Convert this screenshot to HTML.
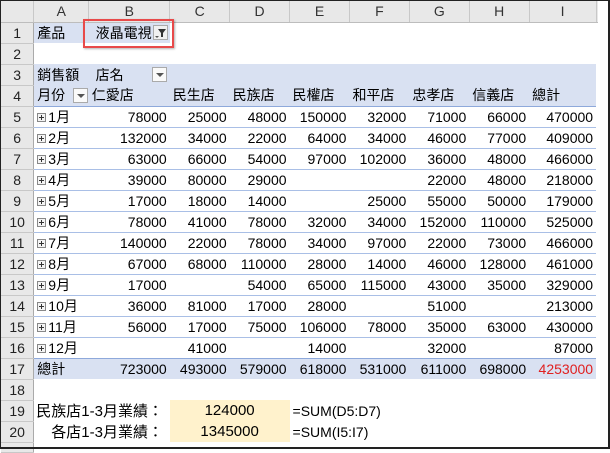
<!DOCTYPE html>
<html><head><meta charset="utf-8"><style>
*{margin:0;padding:0;box-sizing:border-box}
body{width:610px;height:449px;background:#fff;font-family:"Liberation Sans","Noto Sans CJK TC",sans-serif;font-size:14px;color:#000;overflow:hidden;position:relative}
.frame{position:absolute;left:0;top:0;width:610px;height:449px;border:1px solid #222;border-right:2px solid #222;border-bottom:2px solid #222;pointer-events:none;z-index:5}
table{border-collapse:collapse;table-layout:fixed;position:absolute;left:1px;top:1px}
td{height:21px;padding:0 3px;white-space:nowrap;overflow:visible;vertical-align:middle}
tr.h td{height:21px;background:#e8e8e8;text-align:center;border-right:1px solid #c8c8c8;border-bottom:1px solid #bdbdbd;color:#333;font-size:14px}
td.rh{background:#e8e8e8;text-align:center;border-right:1px solid #aaa;border-bottom:1px solid #c8c8c8;padding:0;font-size:14px;color:#222}
.n{text-align:right}
.bl{background:#d9e1f2}
tr.d td:not(.rh){border-bottom:1px solid #a9bfe6}
tr.r4 td:not(.rh){border-bottom:1px solid #8ea9db}
tr.tot td:not(.rh){background:#d9e1f2;border-top:1px solid #8ea9db}
.pl{display:inline-block;position:relative;width:9px;height:9px;border:1px solid #888;margin-right:2px;vertical-align:0;background:#f4f4f4}
.pl:before{content:"";position:absolute;left:1px;top:3px;width:5px;height:1px;background:#333}
.pl:after{content:"";position:absolute;left:3px;top:1px;width:1px;height:5px;background:#333}
.btn{position:absolute;width:15px;height:15px;border:1px solid #aaa;background:#fafafa}
.btn.a:after{content:"";position:absolute;left:3px;top:5px;border-left:4px solid transparent;border-right:4px solid transparent;border-top:4px solid #555}
.y{background:#fff2cc}
</style></head><body>
<table>
<colgroup><col style="width:33px"><col style="width:55px"><col style="width:81px"><col style="width:60px"><col style="width:60px"><col style="width:60px"><col style="width:60px"><col style="width:60px"><col style="width:60px"><col style="width:67px"><col style="width:14px"></colgroup>
<tr class="h"><td style="background:#e8e8e8"></td><td>A</td><td>B</td><td>C</td><td>D</td><td>E</td><td>F</td><td>G</td><td>H</td><td>I</td><td style="border-right:none"></td></tr>
<tr><td class="rh">1</td><td class="bl">產品</td><td class="bl">&nbsp;液晶電視</td><td colspan="8"></td></tr>
<tr><td class="rh">2</td><td colspan="10"></td></tr>
<tr><td class="rh">3</td><td class="bl">銷售額</td><td class="bl">&nbsp;店名</td><td class="bl"></td><td class="bl"></td><td class="bl"></td><td class="bl"></td><td class="bl"></td><td class="bl"></td><td class="bl"></td><td></td></tr>
<tr class="r4"><td class="rh">4</td><td class="bl">月份</td><td class="bl">仁愛店</td><td class="bl">民生店</td><td class="bl">民族店</td><td class="bl">民權店</td><td class="bl">和平店</td><td class="bl">忠孝店</td><td class="bl">信義店</td><td class="bl">總計</td><td style="border-bottom:none!important"></td></tr>
<tr class="d"><td class="rh">5</td><td><span class="pl"></span>1月</td><td class="n">78000</td><td class="n">25000</td><td class="n">48000</td><td class="n">150000</td><td class="n">32000</td><td class="n">71000</td><td class="n">66000</td><td class="n">470000</td><td style="border:none"></td></tr>
<tr class="d"><td class="rh">6</td><td><span class="pl"></span>2月</td><td class="n">132000</td><td class="n">34000</td><td class="n">22000</td><td class="n">64000</td><td class="n">34000</td><td class="n">46000</td><td class="n">77000</td><td class="n">409000</td><td style="border:none"></td></tr>
<tr class="d"><td class="rh">7</td><td><span class="pl"></span>3月</td><td class="n">63000</td><td class="n">66000</td><td class="n">54000</td><td class="n">97000</td><td class="n">102000</td><td class="n">36000</td><td class="n">48000</td><td class="n">466000</td><td style="border:none"></td></tr>
<tr class="d"><td class="rh">8</td><td><span class="pl"></span>4月</td><td class="n">39000</td><td class="n">80000</td><td class="n">29000</td><td class="n"></td><td class="n"></td><td class="n">22000</td><td class="n">48000</td><td class="n">218000</td><td style="border:none"></td></tr>
<tr class="d"><td class="rh">9</td><td><span class="pl"></span>5月</td><td class="n">17000</td><td class="n">18000</td><td class="n">14000</td><td class="n"></td><td class="n">25000</td><td class="n">55000</td><td class="n">50000</td><td class="n">179000</td><td style="border:none"></td></tr>
<tr class="d"><td class="rh">10</td><td><span class="pl"></span>6月</td><td class="n">78000</td><td class="n">41000</td><td class="n">78000</td><td class="n">32000</td><td class="n">34000</td><td class="n">152000</td><td class="n">110000</td><td class="n">525000</td><td style="border:none"></td></tr>
<tr class="d"><td class="rh">11</td><td><span class="pl"></span>7月</td><td class="n">140000</td><td class="n">22000</td><td class="n">78000</td><td class="n">34000</td><td class="n">97000</td><td class="n">22000</td><td class="n">73000</td><td class="n">466000</td><td style="border:none"></td></tr>
<tr class="d"><td class="rh">12</td><td><span class="pl"></span>8月</td><td class="n">67000</td><td class="n">68000</td><td class="n">110000</td><td class="n">28000</td><td class="n">14000</td><td class="n">46000</td><td class="n">128000</td><td class="n">461000</td><td style="border:none"></td></tr>
<tr class="d"><td class="rh">13</td><td><span class="pl"></span>9月</td><td class="n">17000</td><td class="n"></td><td class="n">54000</td><td class="n">65000</td><td class="n">115000</td><td class="n">43000</td><td class="n">35000</td><td class="n">329000</td><td style="border:none"></td></tr>
<tr class="d"><td class="rh">14</td><td><span class="pl"></span>10月</td><td class="n">36000</td><td class="n">81000</td><td class="n">17000</td><td class="n">28000</td><td class="n"></td><td class="n">51000</td><td class="n"></td><td class="n">213000</td><td style="border:none"></td></tr>
<tr class="d"><td class="rh">15</td><td><span class="pl"></span>11月</td><td class="n">56000</td><td class="n">17000</td><td class="n">75000</td><td class="n">106000</td><td class="n">78000</td><td class="n">35000</td><td class="n">63000</td><td class="n">430000</td><td style="border:none"></td></tr>
<tr><td class="rh">16</td><td><span class="pl"></span>12月</td><td class="n"></td><td class="n">41000</td><td class="n"></td><td class="n">14000</td><td class="n"></td><td class="n">32000</td><td class="n"></td><td class="n">87000</td><td></td></tr>
<tr class="tot"><td class="rh">17</td><td>總計</td><td class="n">723000</td><td class="n">493000</td><td class="n">579000</td><td class="n">618000</td><td class="n">531000</td><td class="n">611000</td><td class="n">698000</td><td class="n" style="color:#e02020">4253000</td><td style="background:#fff!important;border-top:none!important"></td></tr>
<tr><td class="rh">18</td><td colspan="10"></td></tr>
<tr><td class="rh">19</td><td colspan="2" style="padding-left:2px;font-size:15px">民族店1-3月業績：</td><td colspan="2" class="y" style="text-align:center;font-size:15px">124000</td><td colspan="3" style="font-size:14px">=SUM(D5:D7)</td><td colspan="3"></td></tr>
<tr><td class="rh">20</td><td colspan="2" style="padding-left:17px;font-size:15px">各店1-3月業績：</td><td colspan="2" class="y" style="text-align:center;font-size:15px">1345000</td><td colspan="3" style="font-size:14px">=SUM(I5:I7)</td><td colspan="3"></td></tr>
<tr><td class="rh" style="height:10px"></td><td colspan="10" style="height:10px"></td></tr>
</table>
<div class="btn" style="left:153px;top:25px;background:#f0f0f0"></div>
<svg style="position:absolute;left:154px;top:26px" width="14" height="14"><path d="M4 3h8L9 7v4H7V7z" fill="#333"/><path d="M1 10h4l-2 2z" fill="#555"/></svg>
<div class="btn a" style="left:152px;top:67px"></div>
<div class="btn a" style="left:73px;top:88px"></div>
<div style="position:absolute;left:83px;top:19px;width:91px;height:29px;border:2px solid #e84a4a;box-shadow:1px 1px 2px rgba(0,0,0,.3)"></div>
<div style="position:absolute;left:598px;top:0;width:12px;height:449px;background:#fff"></div>
<div class="frame"></div>
</body></html>
